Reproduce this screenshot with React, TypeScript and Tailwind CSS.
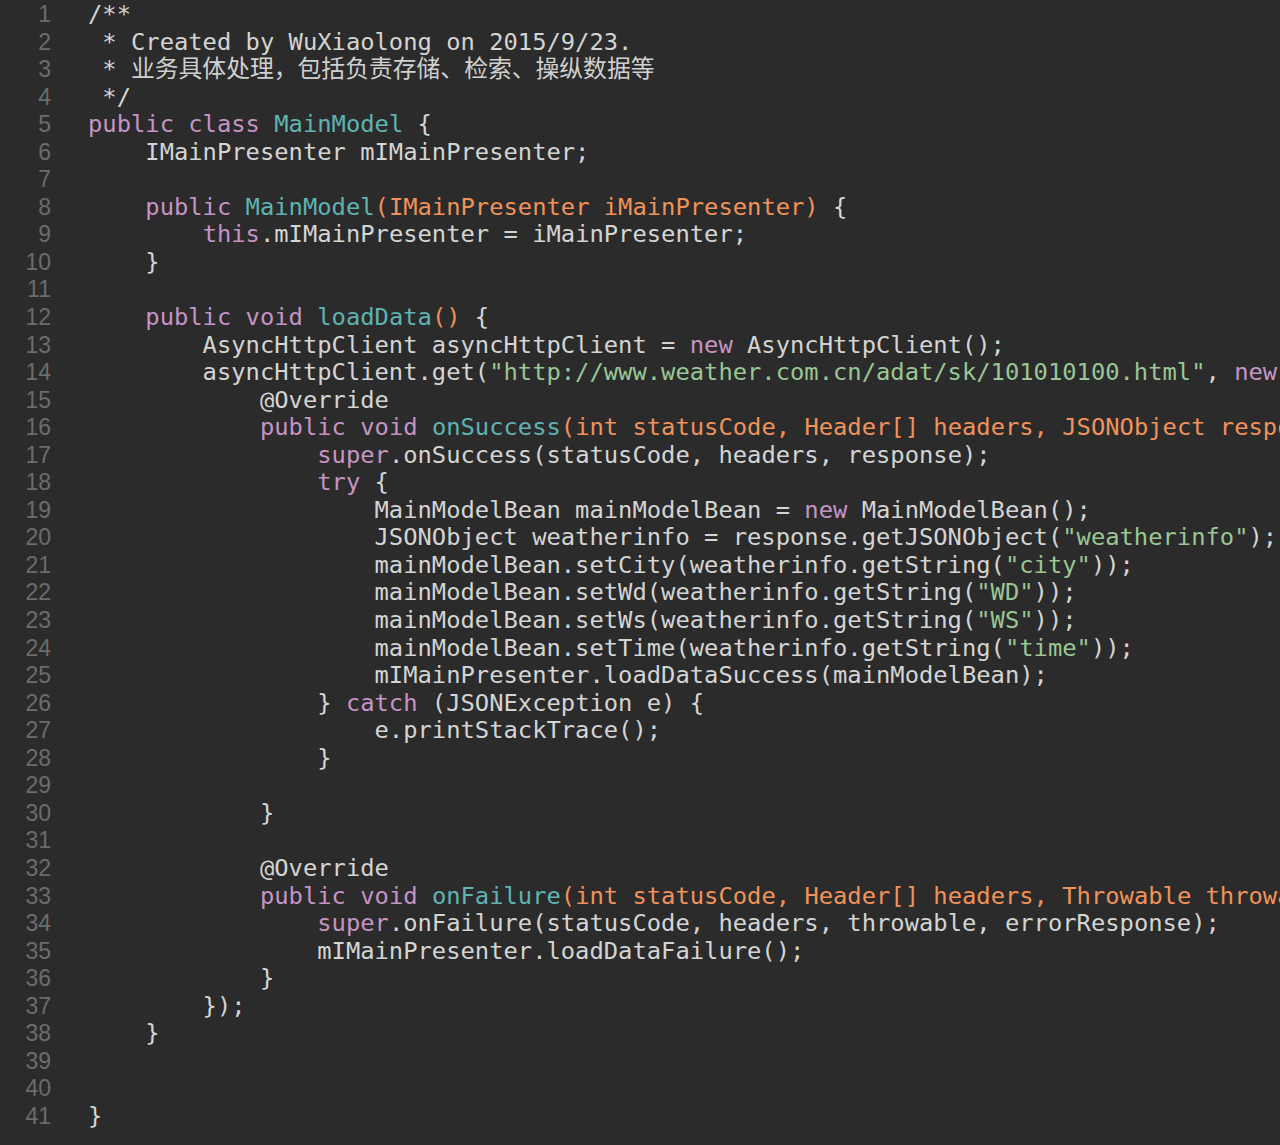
type Seg = [string, string?];

const tone: Record<string, string> = {
  k: 'text-[#c594c5]',
  f: 'text-[#5fb3b3]',
  p: 'text-[#f0925a]',
  s: 'text-[#99c794]',
  z: 'text-[#d0d0d0] text-[23.8px]',
};

const i4 = '    ';
const i8 = i4 + i4;
const i12 = i8 + i4;
const i16 = i8 + i8;
const i20 = i16 + i4;

const lines: Seg[][] = [
  [['/**']],
  [[' * Created by WuXiaolong on 2015/9/23.']],
  [[' * '], ['业务具体处理，包括负责存储、检索、操纵数据等', 'z']],
  [[' */']],
  [['public class ', 'k'], ['MainModel', 'f'], [' {']],
  [[i4 + 'IMainPresenter mIMainPresenter;']],
  [],
  [[i4], ['public ', 'k'], ['MainModel', 'f'], ['(IMainPresenter iMainPresenter)', 'p'], [' {']],
  [[i8], ['this', 'k'], ['.mIMainPresenter = iMainPresenter;']],
  [[i4 + '}']],
  [],
  [[i4], ['public void ', 'k'], ['loadData', 'f'], ['()', 'p'], [' {']],
  [[i8 + 'AsyncHttpClient asyncHttpClient = '], ['new', 'k'], [' AsyncHttpClient();']],
  [[i8 + 'asyncHttpClient.get('], ['"http://www.weather.com.cn/adat/sk/101010100.html"', 's'], [', '], ['new', 'k'], [' JsonHttpResponseHandler() {']],
  [[i12 + '@Override']],
  [[i12], ['public void ', 'k'], ['onSuccess', 'f'], ['(int statusCode, Header[] headers, JSONObject response)', 'p'], [' {']],
  [[i16], ['super', 'k'], ['.onSuccess(statusCode, headers, response);']],
  [[i16], ['try', 'k'], [' {']],
  [[i20 + 'MainModelBean mainModelBean = '], ['new', 'k'], [' MainModelBean();']],
  [[i20 + 'JSONObject weatherinfo = response.getJSONObject('], ['"weatherinfo"', 's'], [');']],
  [[i20 + 'mainModelBean.setCity(weatherinfo.getString('], ['"city"', 's'], ['));']],
  [[i20 + 'mainModelBean.setWd(weatherinfo.getString('], ['"WD"', 's'], ['));']],
  [[i20 + 'mainModelBean.setWs(weatherinfo.getString('], ['"WS"', 's'], ['));']],
  [[i20 + 'mainModelBean.setTime(weatherinfo.getString('], ['"time"', 's'], ['));']],
  [[i20 + 'mIMainPresenter.loadDataSuccess(mainModelBean);']],
  [[i16 + '} '], ['catch', 'k'], [' (JSONException e) {']],
  [[i20 + 'e.printStackTrace();']],
  [[i16 + '}']],
  [],
  [[i12 + '}']],
  [],
  [[i12 + '@Override']],
  [[i12], ['public void ', 'k'], ['onFailure', 'f'], ['(int statusCode, Header[] headers, Throwable throwable, JSONObject errorResponse)', 'p'], [' {']],
  [[i16], ['super', 'k'], ['.onFailure(statusCode, headers, throwable, errorResponse);']],
  [[i16 + 'mIMainPresenter.loadDataFailure();']],
  [[i12 + '}']],
  [[i8 + '});']],
  [[i4 + '}']],
  [],
  [],
  [['}']],
];

export default function App() {
  return (
    <div className="h-[1145px] w-[1280px] overflow-hidden bg-[#2b2b2b] pt-px">
      <div className="flex">
        {/* gutter */}
        <div className="w-[51px] shrink-0 text-right font-['Liberation_Sans',sans-serif] text-[23px] leading-[27.55px] text-[#6c6c6c]">
          {lines.map((_, n) => (
            <div key={n} className="h-[27.55px]">{n + 1}</div>
          ))}
        </div>
        <div className="min-w-0 flex-1 overflow-hidden pl-[37px] font-['DejaVu_Sans_Mono','Noto_Sans_CJK_SC',monospace] text-[23.8px] leading-[27.55px] text-[#d4d4d4]">
          {lines.map((segs, n) => (
            <div key={n} className="h-[27.55px] whitespace-pre">
              {segs.map(([txt, t], j) => (
                <span key={j} className={t ? tone[t] : undefined}>{txt}</span>
              ))}
            </div>
          ))}
        </div>
      </div>
    </div>
  );
}
